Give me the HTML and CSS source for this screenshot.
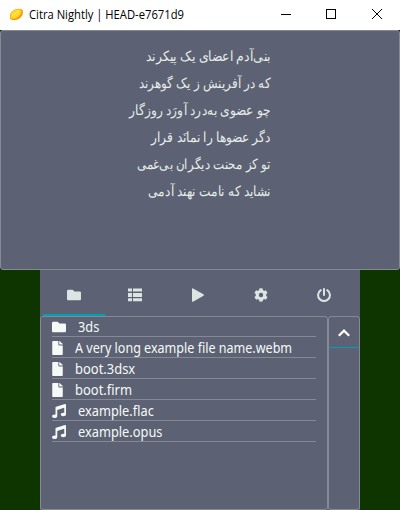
FILE: index.html
```html
<!DOCTYPE html>
<html lang="en">
<head>
<meta charset="utf-8">
<title>Citra Nightly | HEAD-e7671d9</title>
<link rel="stylesheet" href="styles.css">
</head>
<body>
<svg width="0" height="0" class="defs">
  <symbol id="folder" viewBox="0 0 512 512"><path d="M464 128H272l-64-64H48C21 64 0 85 0 112v288c0 27 21 48 48 48h416c27 0 48-21 48-48V176c0-27-21-48-48-48z"/></symbol>
  <symbol id="file" viewBox="0 0 384 512"><path d="M224 136V0H24C11 0 0 11 0 24v464c0 13 11 24 24 24h336c13 0 24-11 24-24V160H248c-13 0-24-11-24-24zm160-14v6H256V0h6c6 0 12 3 17 7l98 98c4 5 7 11 7 17z"/></symbol>
  <symbol id="music" viewBox="0 0 512 512"><path d="M470 1.5L150 96c-13 4-22 17-22 31v264c-10-4-21-6-32-6-53 0-96 29-96 64s43 64 96 64 96-29 96-64V215l256-75v187c-10-4-21-6-32-6-53 0-96 29-96 64s43 64 96 64 96-29 96-64V32c0-21-21-37-42-30.500z"/></symbol>
</svg>
<header class="titlebar">
  <svg class="logo" viewBox="0 0 16 14">
    <path d="M1 10C0 5 6 0 12 1c2 0 3 1 3 3 0 6-6 10-11 9-2 0-3-1-3-3z" fill="#ff9900"/>
    <path d="M1.500 8.500C2 4 7 .8 11.500 1.500c2.500.5 2 3 .5 5.500-2 3-5.500 5-8.500 4.500-1.500-.3-2-1.500-2-3z" fill="#ffd51c"/>
    <path d="M3 9l8-6M5 4l4 5M3 6l4 5M8 2l3 5" stroke="#ffef83" stroke-width=".7" fill="none"/>
  </svg>
  <h1><span>Citra Nightly | HEAD-e7671d9</span></h1>
  <svg class="controls" viewBox="0 0 110 12" shape-rendering="crispEdges">
    <path d="M0 6.500H10M45.500 1.500h9v9h-9z"/>
    <path d="M91 1l10 10M101 1L91 11" shape-rendering="auto"/>
  </svg>
</header>
<main>
  <section class="top-screen" lang="fa" dir="rtl">
    <p><span class="v1">بنی‌آدم اعضای یک پیکرند</span></p>
    <p><span class="v2">که در آفرینش ز یک گوهرند</span></p>
    <p><span class="v3">چو عضوی به‌درد آورَد روزگار</span></p>
    <p><span class="v4">دگر عضوها را نمانَد قرار</span></p>
    <p><span class="v5">تو کز محنت دیگران بی‌غمی</span></p>
    <p><span class="v6">نشاید که نامت نهند آدمی</span></p>
  </section>
  <section class="bottom-screen">
    <nav>
      <a class="active"><svg><use href="#folder"/></svg></a>
      <a><svg viewBox="0 0 14 14"><path d="M0 .5h4v3H0zM5 .5h9v3H5zM0 5h4v4H0zM5 5h9v4H5zM0 10.200h4v3H0zM5 10.200h9v3H5z"/></svg></a>
      <a><svg viewBox="0 0 14 14"><path d="M1 1Q1 0 2 .4L12.500 6.200Q13.500 7 12.500 7.800L2 13.700Q1 14 1 13z"/></svg></a>
      <a><svg viewBox="0 0 512 512"><path d="M487 316l-42-25c4-23 4-47 0-70l42-25c5-3 7-8 6-14-11-35-30-67-55-95-4-4-10-5-15-2l-42 25c-18-15-39-27-61-35V26c0-6-4-11-10-12-36-8-73-8-109 0-6 1-10 6-10 12v49c-22 8-43 20-61 35L88 85c-5-3-11-2-15 2-25 28-44 60-55 95-1 6 1 11 6 14l42 25c-4 23-4 47 0 70l-42 25c-5 3-7 8-6 14 11 35 30 67 55 95 4 4 10 5 15 2l42-25c18 15 39 27 61 35v49c0 6 4 11 10 12 36 8 73 8 109 0 6-1 10-6 10-12v-49c22-8 43-20 61-35l42 25c5 3 11 2 15-2 25-28 44-60 55-95 1-6-1-11-6-14zM256 336a80 80 0 1 1 0-160 80 80 0 0 1 0 160z"/></svg></a>
      <a><svg viewBox="0 0 14 14"><path d="M3.800 2.200A5.900 5.900 0 1 0 10.200 2.200M7 1V7" class="power"/></svg></a>
    </nav>
    <div class="browser">
      <ul class="files">
        <li class="wide"><svg><use href="#folder"/></svg><span class="n1">3ds</span></li>
        <li><svg><use href="#file"/></svg><span class="n2">A very long example file name.webm</span></li>
        <li><svg><use href="#file"/></svg><span class="n3">boot.3dsx</span></li>
        <li><svg><use href="#file"/></svg><span class="n4">boot.firm</span></li>
        <li class="wide"><svg><use href="#music"/></svg><span class="n5">example.flac</span></li>
        <li class="wide"><svg><use href="#music"/></svg><span class="n6">example.opus</span></li>
      </ul>
      <aside>
        <button aria-label="Up"><svg viewBox="0 0 14 10"><path d="M1.800 7.800L7 2.600L12.200 7.800"/></svg></button>
      </aside>
    </div>
  </section>
</main>
</body>
</html>
```
FILE: styles.css
```css
* { box-sizing: border-box; margin: 0; padding: 0; }
body { width: 400px; height: 510px; overflow: hidden; background: #0e3500; font-family: "Noto Sans", "Open Sans", sans-serif; }
.defs { position: absolute; }
.titlebar { height: 30px; background: #fff; display: flex; align-items: center; padding-left: 9px; }
.logo { width: 15px; height: 13px; margin-top: -1px; }
h1 { flex: 1; padding-left: 5px; font: 12px/30px "Open Sans", sans-serif; color: #000; white-space: nowrap; }
h1 span { display: inline-block; transform-origin: left; transform: scaleX(.935); }
.controls { width: 110px; height: 12px; margin: -3px 9px 0 0; fill: none; stroke: #000; }
.top-screen { height: 240px; background: #5c6173; border: 1px solid #858993; border-radius: 3px; padding: 11px 128px 0 0; color: #e8ede9; font-size: 14px; line-height: 27px; }
.top-screen p { height: 27px; white-space: nowrap; }
.top-screen span { display: inline-block; transform-origin: right; }
.v1 { transform: scaleX(.887); }
.v2 { transform: scaleX(.852); }
.v3 { transform: scaleX(.871); }
.v4 { transform: scaleX(.87); }
.v5 { transform: scaleX(.845); }
.v6 { transform: scaleX(.865); }
.bottom-screen { width: 320px; height: 240px; margin: 0 auto; background: #5c6173; }
nav { height: 46px; display: flex; padding: 0 4px 0 3px; }
nav a { flex: 0 0 63px; display: flex; align-items: center; justify-content: center; padding: 5px 4px 0 0; border-bottom: 2px solid transparent; }
nav .active { flex-basis: 62px; padding-right: 0; border-color: #009fb5; }
nav svg { width: 14px; height: 14px; fill: #dde5e4; }
.power { fill: none; stroke: #dde5e4; stroke-width: 2; stroke-linecap: round; }
.browser { display: flex; height: 194px; }
.files { width: 288px; border: 1px solid #858993; border-radius: 3px; padding: 0 11px; list-style: none; }
.files li { display: flex; align-items: center; height: 21px; padding-top: 2px; border-bottom: 1px solid #858993; color: #f5faf6; font-size: 14px; line-height: 18px; white-space: nowrap; }
.files li:first-child { height: 20px; padding-top: 1px; }
.files svg { flex: none; width: 11px; height: 14px; margin-right: 12px; fill: #f5faf6; }
.files .wide svg { width: 14px; }
.files span { transform-origin: left; transform: scaleX(.915); }
.files .n2 { transform: scaleX(.896); }
.files .n3, .files .n4 { transform: scaleX(.925); }
aside { width: 32px; border: 1px solid #858993; border-radius: 3px; }
button { display: flex; align-items: center; justify-content: center; width: 100%; height: 31px; padding-top: 2px; background: none; border: 0; border-bottom: 1px solid #009fb5; }
button svg { width: 14px; height: 10px; fill: none; stroke: #fff; stroke-width: 2.200; }
```
